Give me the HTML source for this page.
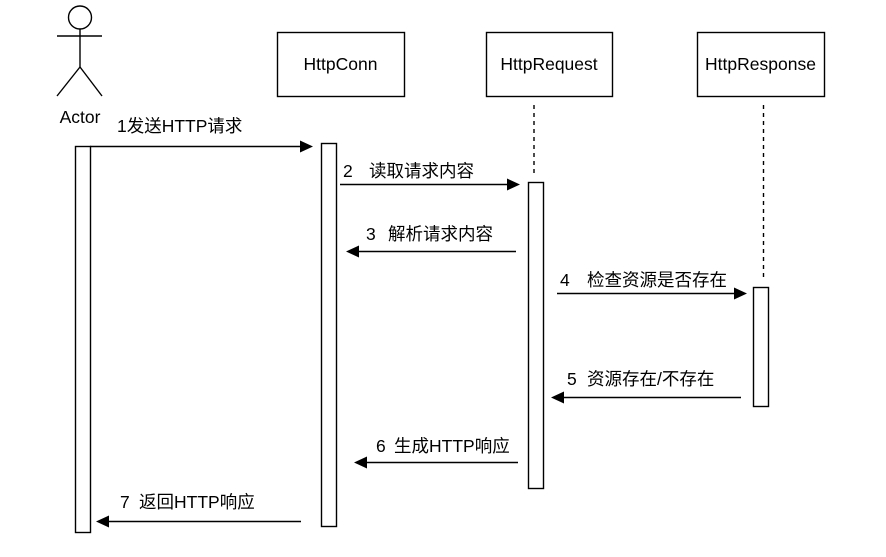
<!DOCTYPE html>
<html><head><meta charset="utf-8"><style>
html,body{margin:0;padding:0;background:#fff;width:886px;height:557px;overflow:hidden}
text{font-family:"Liberation Sans","Noto Sans CJK SC",sans-serif;fill:#000}
</style></head><body>
<svg width="886" height="557" viewBox="0 0 886 557" xmlns="http://www.w3.org/2000/svg">
<g fill="none" stroke="#000" stroke-width="1.4">
<circle cx="80" cy="17.5" r="11.5"/>
<line x1="80" y1="29" x2="80" y2="67"/>
<line x1="57" y1="36" x2="102" y2="36"/>
<line x1="80" y1="67" x2="57" y2="96"/>
<line x1="80" y1="67" x2="102" y2="96"/>
<rect x="277.5" y="32.5" width="127" height="64"/>
<rect x="486.5" y="32.5" width="126" height="64"/>
<rect x="697.5" y="32.5" width="127" height="64"/>
<line x1="534" y1="105" x2="534" y2="173" stroke-dasharray="4,4"/>
<line x1="763.5" y1="105" x2="763.5" y2="281" stroke-dasharray="4,4"/>
<rect x="75.5" y="146.5" width="15" height="386" fill="#fff"/>
<rect x="321.5" y="143.5" width="15" height="383" fill="#fff"/>
<rect x="528.5" y="182.5" width="15" height="306" fill="#fff"/>
<rect x="753.5" y="287.5" width="15" height="119" fill="#fff"/>
<line x1="90" y1="146.5" x2="302" y2="146.5"/>
<line x1="340" y1="184.5" x2="508" y2="184.5"/>
<line x1="516" y1="251.5" x2="358" y2="251.5"/>
<line x1="557" y1="293.5" x2="736" y2="293.5"/>
<line x1="741" y1="397.5" x2="563" y2="397.5"/>
<line x1="518" y1="462.5" x2="366" y2="462.5"/>
<line x1="301" y1="521.5" x2="108" y2="521.5"/>
</g>
<g fill="#000">
<polygon points="300,140.5 313,146.5 300,152.5"/>
<polygon points="507,178.5 520,184.5 507,190.5"/>
<polygon points="359,245.5 346,251.5 359,257.5"/>
<polygon points="734,287.5 747,293.5 734,299.5"/>
<polygon points="564,391.5 551,397.5 564,403.5"/>
<polygon points="367,456.5 354,462.5 367,468.5"/>
<polygon points="109,515.5 96,521.5 109,527.5"/>
</g>
<g font-size="17.5">
<text x="80" y="123" text-anchor="middle">Actor</text>
<text x="340.5" y="70" text-anchor="middle">HttpConn</text>
<text x="549" y="70" text-anchor="middle">HttpRequest</text>
<text x="760.5" y="70" text-anchor="middle">HttpResponse</text>
<text x="117" y="132">1发送HTTP请求</text>
<text x="343" y="177">2</text><text x="369" y="177">读取请求内容</text>
<text x="366" y="240">3</text><text x="388" y="240">解析请求内容</text>
<text x="560" y="286">4</text><text x="587" y="286">检查资源是否存在</text>
<text x="567" y="385">5</text><text x="587" y="385">资源存在/不存在</text>
<text x="376" y="452">6</text><text x="394" y="452">生成HTTP响应</text>
<text x="120" y="508">7</text><text x="139" y="508">返回HTTP响应</text>
</g>
</svg>
</body></html>
